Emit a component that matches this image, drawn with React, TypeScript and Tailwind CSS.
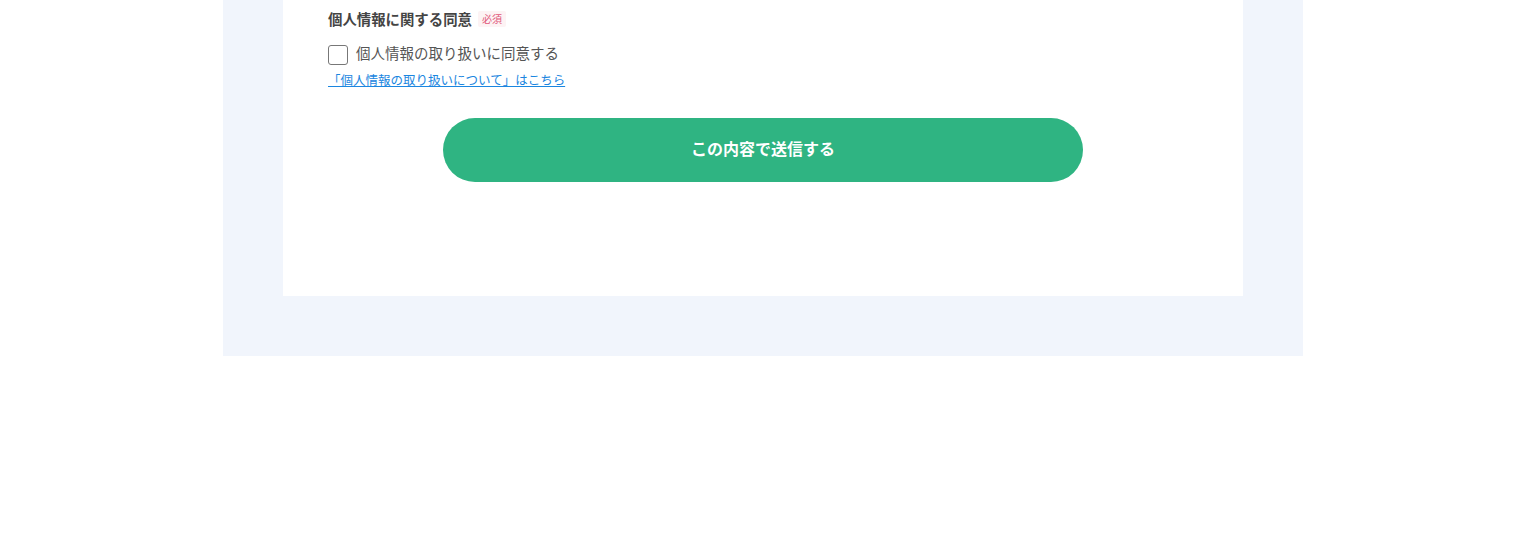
export default function App() {
  return (
    <main
      className="w-full h-[542px] bg-white"
      style={{ fontFamily: '"Noto Sans CJK JP", "Noto Sans", sans-serif' }}
    >
      <section className="mx-auto w-[1080px] bg-[#f1f5fc] px-[60px] pb-[60px]">
        <div className="bg-white h-[296px] px-[45px] pt-[9px]">
          {/* consent */}
          <div className="flex items-center gap-[6px] h-[20px]">
            <span className="text-[14.4px] font-bold text-[#444] leading-[20px]">
              個人情報に関する同意
            </span>
            <span className="bg-[#fdf3f4] text-[#e0577a] text-[10px] leading-[16px] px-[4px] rounded-[2px]">
              必須
            </span>
          </div>

          <label className="mt-[16px] flex items-center gap-[8px] cursor-pointer">
            <span className="w-[20px] h-[20px] border border-[#777] rounded-[3px] bg-white"></span>
            <span className="text-[14.5px] text-[#555] leading-[20px] -mt-[5px]">
              個人情報の取り扱いに同意する
            </span>
          </label>

          <a
            href="#"
            className="block mt-[6px] text-[12.5px] leading-[18px] text-[#1b86e0] underline w-fit"
          >
            「個人情報の取り扱いについて」はこちら
          </a>

          <div className="flex justify-center mt-[29px]">
            <button className="w-[640px] h-[64px] rounded-full bg-[#2fb482] text-white text-[16px] font-bold pb-[4px]">
              この内容で送信する
            </button>
          </div>
        </div>
      </section>
    </main>
  );
}
